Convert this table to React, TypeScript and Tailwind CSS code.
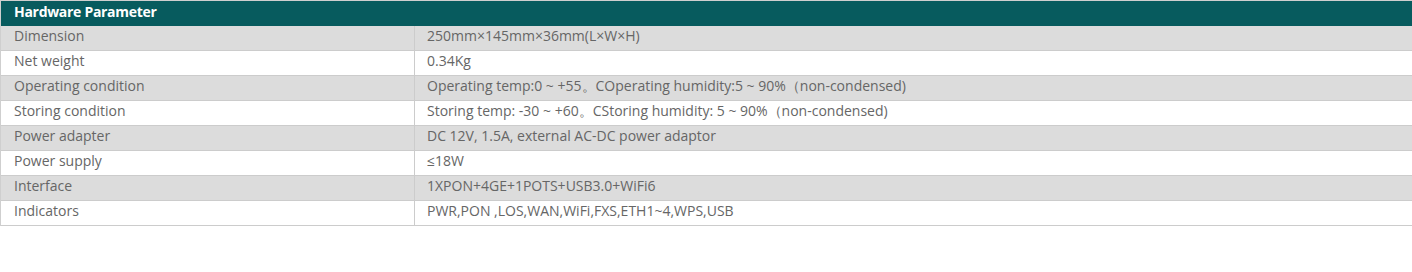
const rows: [string, string][] = [
  ['Dimension', '250mm×145mm×36mm(L×W×H)'],
  ['Net weight', '0.34Kg'],
  ['Operating condition', 'Operating temp:0 ~ +55。COperating humidity:5 ~ 90%（non-condensed)'],
  ['Storing condition', 'Storing temp: -30 ~ +60。CStoring humidity: 5 ~ 90%（non-condensed)'],
  ['Power adapter', 'DC 12V, 1.5A, external AC-DC power adaptor'],
  ['Power supply', '≤18W'],
  ['Interface', '1XPON+4GE+1POTS+USB3.0+WiFi6'],
  ['Indicators', 'PWR,PON ,LOS,WAN,WiFi,FXS,ETH1~4,WPS,USB'],
];

const App = () => {
  return (
    <div className="w-[1412px] h-[272px] bg-white overflow-hidden" style={{ fontFamily: '"Open Sans", sans-serif' }}>
      <div className="w-[1420px] border-l border-t border-[#cfcfcf]">
        <div className="h-[25px] bg-[#075b5e] flex items-center pl-[13px] pb-[4px]">
          <span className="text-white text-[14px] font-bold tracking-[-0.3px]">Hardware Parameter</span>
        </div>
        {rows.map(([label, value], i) => (
          <div
            key={label}
            className={`flex h-[25px] border-b border-[#cccccc] text-[14px] leading-none text-[#666666] ${i % 2 === 0 ? 'bg-[#dcdcdc]' : 'bg-white'}`}
          >
            <div className="w-[414px] shrink-0 border-r border-[#cccccc] pl-[13px] pb-[4px] flex items-center">{label}</div>
            <div className="pl-[12px] pb-[4px] flex items-center">{value}</div>
          </div>
        ))}
      </div>
    </div>
  );
};

export default App;
